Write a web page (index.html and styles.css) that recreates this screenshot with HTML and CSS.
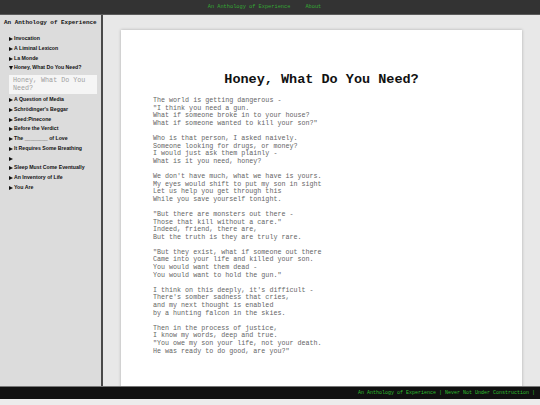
FILE: index.html
```html
<!DOCTYPE html>
<html>
<head>
<meta charset="utf-8">
<title>An Anthology of Experience</title>
<link rel="stylesheet" href="styles.css">
</head>
<body>
<header class="topbar">
  <nav class="nav">
    <a class="nav-link" href="#">An Anthology of Experience</a>
    <a class="nav-link" href="#">About</a>
  </nav>
</header>
<div class="main">
  <aside class="sidebar">
    <div class="side-title">An Anthology of Experience</div>
    <ul class="toc">
      <li class="toc-item">Invocation</li>
      <li class="toc-item">A Liminal Lexicon</li>
      <li class="toc-item">La Monde</li>
      <li class="toc-item open">Honey, What Do You Need?</li>
      <li class="toc-sub">Honey, What Do You Need?</li>
      <li class="toc-item">A Question of Media</li>
      <li class="toc-item">Schrödinger's Beggar</li>
      <li class="toc-item">Seed:Pinecone</li>
      <li class="toc-item">Before the Verdict</li>
      <li class="toc-item">The ________ of Love</li>
      <li class="toc-item">It Requires Some Breathing</li>
      <li class="toc-item"></li>
      <li class="toc-item">Sleep Must Come Eventually</li>
      <li class="toc-item">An Inventory of Life</li>
      <li class="toc-item">You Are</li>
    </ul>
  </aside>
  <section class="content">
    <article class="paper">
      <h1 class="poem-title">Honey, What Do You Need?</h1>
<pre class="poem">The world is getting dangerous -
"I think you need a gun.
What if someone broke in to your house?
What if someone wanted to kill your son?"

Who is that person, I asked naively.
Someone looking for drugs, or money?
I would just ask them plainly -
What is it you need, honey?

We don't have much, what we have is yours.
My eyes would shift to put my son in sight
Let us help you get through this
While you save yourself tonight.

"But there are monsters out there -
Those that kill without a care."
Indeed, friend, there are,
But the truth is they are truly rare.

"But they exist, what if someone out there
Came into your life and killed your son.
You would want them dead -
You would want to hold the gun."

I think on this deeply, it's difficult -
There's somber sadness that cries,
and my next thought is enabled
by a hunting falcon in the skies.

Then in the process of justice,
I know my words, deep and true.
"You owe my son your life, not your death.
He was ready to do good, are you?"</pre>
    </article>
  </section>
</div>
<footer class="footer">An Anthology of Experience | Never Not Under Construction |</footer>
</body>
</html>
```
FILE: styles.css
```css
html, body {
  margin: 0;
  padding: 0;
}
body {
  background: #ececec;
  width: 540px;
  height: 405px;
  overflow: hidden;
  font-family: "Liberation Mono", monospace;
}
.topbar {
  height: 14px;
  background: #333333;
  border-bottom: 1px solid #5a5a5a;
  display: flex;
  align-items: center;
  justify-content: center;
}
.nav {
  display: flex;
  gap: 15px;
  padding-right: 11px;
}
.nav-link {
  color: #33a833;
  text-decoration: none;
  font-family: "Liberation Mono", monospace;
  font-size: 5.3px;
  line-height: 14px;
}
.main {
  display: flex;
  height: 371px;
  overflow: hidden;
}
.sidebar {
  width: 101px;
  flex: none;
  background: #dcdcdc;
  border-right: 2px solid #4a4a4a;
  padding-top: 4px;
}
.side-title {
  font-family: "Liberation Mono", monospace;
  font-weight: bold;
  font-size: 5.95px;
  line-height: 8px;
  color: #111;
  padding-left: 4px;
  margin-bottom: 7px;
  white-space: nowrap;
}
.toc {
  list-style: none;
  margin: 0;
  padding: 0 4px 0 9px;
}
.toc-item {
  font-family: "Liberation Sans", Arial, sans-serif;
  font-weight: bold;
  font-size: 5.2px;
  line-height: 9.75px;
  height: 9.75px;
  color: #111;
  white-space: nowrap;
}
.toc-item::before {
  content: "";
  display: inline-block;
  width: 0;
  height: 0;
  border-top: 2.5px solid transparent;
  border-bottom: 2.5px solid transparent;
  border-left: 4px solid #111;
  margin-right: 1px;
  vertical-align: -1px;
}
.toc-item.open::before {
  border-left: 2.5px solid transparent;
  border-right: 2.5px solid transparent;
  border-top: 4px solid #111;
  border-bottom: 0;
  vertical-align: -0.5px;
}
.toc-sub {
  background: #f5f5f5;
  color: #a0a0a0;
  font-family: "Liberation Mono", monospace;
  font-size: 6.7px;
  line-height: 7.6px;
  padding: 2px 4px;
  margin: 2px 0 1px 0;
  height: 15px;
  overflow: hidden;
}
.content {
  flex: 1;
  background: #e8e8e8;
  padding: 15px 18px 0 18px;
  overflow: hidden;
}
.paper {
  background: #ffffff;
  height: 400px;
  box-shadow: 0 0 3px rgba(0, 0, 0, 0.25);
  padding: 42px 0 0 32px;
  box-sizing: border-box;
}
.poem-title {
  margin: 0 0 9px -32px;
  text-align: center;
  font-family: "Liberation Mono", monospace;
  font-weight: bold;
  font-size: 13.5px;
  line-height: 16px;
  color: #111;
}
.poem {
  margin: 0;
  font-family: "Liberation Mono", monospace;
  font-size: 6.7px;
  line-height: 7.6px;
  color: #666;
}
.footer {
  height: 12px;
  background: #111111;
  border-top: 1px solid #777;
  color: #2fbf2f;
  font-family: "Liberation Mono", monospace;
  font-size: 5px;
  line-height: 12px;
  text-align: right;
  padding-right: 5px;
}
```
